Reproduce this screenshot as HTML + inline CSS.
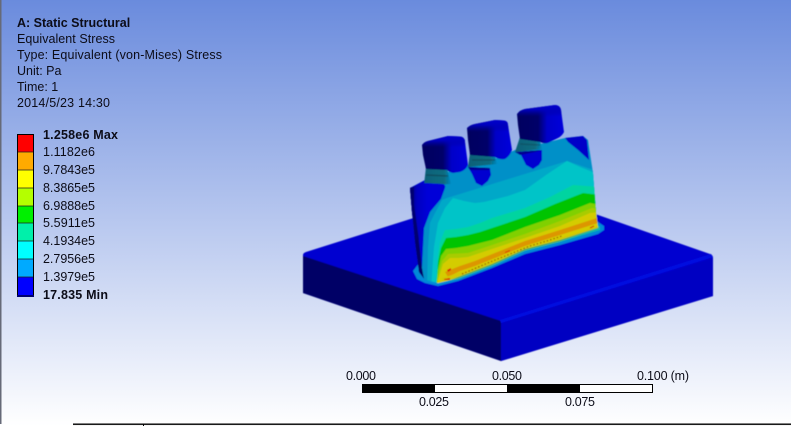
<!DOCTYPE html>
<html><head><meta charset="utf-8"><style>
html,body{margin:0;padding:0;background:#fff}
svg{display:block;position:absolute;left:0;top:0}
text{font-family:"Liberation Sans",sans-serif;font-size:12.5px;fill:#0c0c18}
.b{font-weight:bold}
</style></head><body style="width:791px;height:426px;overflow:hidden;position:relative">
<svg width="791" height="426" viewBox="0 0 791 426" xmlns="http://www.w3.org/2000/svg">
<defs>
<linearGradient id="bg" x1="0" y1="0" x2="0" y2="1"><stop offset="0" stop-color="#6a8bdd"/><stop offset="1" stop-color="#ffffff"/></linearGradient>
<linearGradient id="tab" x1="0" y1="0" x2="1" y2="0"><stop offset="0" stop-color="#000060"/><stop offset=".45" stop-color="#000068"/><stop offset=".64" stop-color="#0000c8"/><stop offset="1" stop-color="#0000dc"/></linearGradient>
<linearGradient id="tabtop" x1="0" y1="0" x2="0" y2="1"><stop offset="0" stop-color="#0000cc"/><stop offset=".12" stop-color="#0000c0"/><stop offset=".3" stop-color="#0000a0" stop-opacity="0"/></linearGradient>
<linearGradient id="neck" x1="0" y1="0" x2="1" y2="0"><stop offset="0" stop-color="#086078"/><stop offset=".75" stop-color="#0a6c80"/><stop offset="1" stop-color="#0088c0"/></linearGradient>
<linearGradient id="lobe" x1="0" y1="0" x2="1" y2="0"><stop offset="0" stop-color="#000080"/><stop offset=".2" stop-color="#0000c0"/><stop offset=".5" stop-color="#0000d8"/></linearGradient>
<clipPath id="body"><path d="M410 188L425 180L448 172L468 165L497 158L515 150L565 138L583 136L588 140L593 173L596 213L598 228L560 241L525 250L492 265L458 278L438 283L425 280L419 272L415 242L412 212Z"/></clipPath>
<filter id="s" x="-5%" y="-5%" width="110%" height="110%"><feGaussianBlur stdDeviation="0.5"/></filter>
</defs>
<rect width="791" height="426" fill="url(#bg)"/>
<rect x="0" y="0" width="1.5" height="424" fill="#666a78"/>
<rect x="73" y="423.5" width="718" height="1.4" fill="#000"/>
<rect x="73" y="425" width="718" height="1" fill="#f4f4f4"/>
<rect x="143" y="424" width="1" height="2" fill="#000"/>

<!-- plate -->
<g filter="url(#s)">
<path d="M303 255Q303 253 306 252L515 186L710 254Q713 255 713 258L713 296L501 361L303 293Z" fill="#0000d0"/>
<path d="M303 256L501 321L501 361L303 293Z" fill="#000066"/>
<path d="M501 323L713 258L713 296L501 361Z" fill="#0000c2"/>
<path d="M500 320L711 254L713 257L501 323Z" fill="#0010e0"/>

<!-- fringe at base -->
<path d="M413 271L420 262L598 222L604 226L604 230L598 234L560 245L525 254L492 268L458 281L438 286L425 283L417 279Z" fill="#0088d8"/>
<path d="M424 279L438 283L458 279L492 266L525 251L560 242L600 230L600 226L560 235L430 270Z" fill="#10b8a8"/>

<!-- body -->
<g clip-path="url(#body)">
<rect x="400" y="130" width="210" height="160" fill="#0090c8"/>
<path d="M405 175L445 175L440 198L430 212L424 228L422 268L425 290L405 290Z" fill="#0000d0"/>
<path d="M405 180L411 186L413 198L417 225L422 268L426 290L405 290Z" fill="#00006a"/>
<path d="M447 198L442 200L435 213L430 223L428 247L427 290L600 290L600 172L567 161Z" fill="#00a8c8"/>
<path d="M453 198L464 201L475 203L484 202L492 200L508 196L525 190L546 175L567 161L580 167L600 175L600 290L431 290L432 275L434 247L438 223L445 208Z" fill="#00c4c8"/>
<!-- seagreen -->
<path d="M438 255L440 242L445 230L456 229L468 227L480 223L492 218L525 208L550 197L573 185L600 187L600 290L436 290Z" fill="#00d4a0"/>
<!-- green -->
<path d="M438 262L441 248L446 238L456 237L468 235L480 232L492 228L525 217L555 204L583 193L600 195L600 290L436 290Z" fill="#00c400"/>
<!-- lime -->
<path d="M438 270L441 256L446 249L456 248L468 246L480 243L492 240L525 227L560 215L590 203L600 205L600 290L436 290Z" fill="#80d000"/>
<!-- yellow-lime -->
<path d="M438 276L442 261L448 254L468 253L492 245L525 234L560 221L592 208L600 209L600 290L436 290Z" fill="#a8cc00"/>
<!-- yellow -->
<path d="M438 280L443 264L450 258L458 258L468 257L492 249L525 238L560 226L590 213L600 212L600 290L436 290Z" fill="#d4cc00"/>
<!-- orange -->
<path d="M445 272L460 266L475 261L525 241L560 230L597 218L598 223L560 235L525 246L475 266L460 271L448 277Z" fill="#dc9600"/>
<path d="M442 278L475 268L525 249L560 238L600 226L600 232L560 244L525 254L458 280L442 285Z" fill="#d0c800"/>
<path d="M442 283L458 277L492 264L525 249L560 240L600 227L600 236L440 290Z" fill="#30a060"/>
<!-- hot spots -->
<path d="M447 270l4-2 0 2-3 2zM444 279l6-1 0 2-6 0zM505 252l5-2 0 1-5 2zM536 248l7-2 0 2-7 1z" fill="#d82000"/>
<path d="M462 274L476 268L490 262L510 254L530 246L550 240L562 236" stroke="#903000" stroke-width="1" stroke-dasharray="1.5 2" fill="none"/>
<path d="M590 228l4-2" stroke="#d02000" stroke-width="1"/>
</g>

<!-- holes -->
<path d="M468 167L490 168L491 175L488 181L482 186L476 183L472 174Z" fill="#0000d0"/>
<path d="M468 167L490 168L489 170L470 170Z" fill="#000090"/>
<path d="M515 152L542 150L542 160L539 165L533 169L526 165L521 155Z" fill="#0000d0"/>
<path d="M515 152L542 150L535 152L520 155Z" fill="#000090"/>
<!-- side tab right -->
<path d="M565 138L583 136L587 140L589 160L578 150L568 142Z" fill="#0000c8"/>
<!-- necks -->
<path d="M426 167L447 168L451 184L424 185Z" fill="url(#neck)"/>
<path d="M470 153L495 155L497 164L468 167Z" fill="url(#neck)"/>
<path d="M520 137L540 140L542 149L515 152Z" fill="url(#neck)"/>
<path d="M426 175L448 176" stroke="#0a4050" stroke-width="1.5" opacity=".6"/>
<path d="M472 160L495 160" stroke="#0a4050" stroke-width="1.5" opacity=".5"/>
<path d="M520 144L540 145" stroke="#0a4050" stroke-width="1.5" opacity=".4"/>
<!-- lobe -->
<path d="M410 188Q416 185 425 183L443 184Q446 185 445 188L441 199L430 212L424 228L419 240L416 240L412 212Z" fill="url(#lobe)"/>
<path d="M410 188L414 187L414 205L419 240L416 240L412 212Z" fill="#000070"/>
<!-- tabs -->
<g>
<path d="M422 145Q424 142 428 141L448 136L460 136.500Q465 137 465 142L468 165Q466 170 460 172L453 173Q449 172 447 170L426 169L423 155Z" fill="url(#tab)"/>
<path d="M422 145Q424 142 428 141L448 136L460 136.500Q465 137 465 142L468 165Q466 170 460 172L453 173Q449 172 447 170L426 169L423 155Z" fill="url(#tabtop)"/>
<path d="M467 128Q470 125 475 124L495 120L504 120.500Q508 121 508 125L512 150Q510 156 505 159Q500 160 495 157L470 155L468 140Z" fill="url(#tab)"/>
<path d="M467 128Q470 125 475 124L495 120L504 120.500Q508 121 508 125L512 150Q510 156 505 159Q500 160 495 157L470 155L468 140Z" fill="url(#tabtop)"/>
<path d="M517 114Q520 110 525 109L555 105Q560 105 561 110L564 132Q562 136 558 138L548 143Q544 144 540 142L520 139L518 125Z" fill="url(#tab)"/>
<path d="M517 114Q520 110 525 109L555 105Q560 105 561 110L564 132Q562 136 558 138L548 143Q544 144 540 142L520 139L518 125Z" fill="url(#tabtop)"/>
</g>
</g>

<!-- header text -->
<text x="17" y="27" class="b">A: Static Structural</text>
<text x="17" y="43" textLength="98">Equivalent Stress</text>
<text x="17" y="59" textLength="205">Type: Equivalent (von-Mises) Stress</text>
<text x="17" y="75">Unit: Pa</text>
<text x="17" y="91">Time: 1</text>
<text x="17" y="107" textLength="93">2014/5/23 14:30</text>

<!-- legend -->
<rect x="17" y="134" width="16" height="18" fill="#ff0000"/>
<rect x="17" y="152" width="16" height="18" fill="#ffaa00"/>
<rect x="17" y="170" width="16" height="18" fill="#ffff00"/>
<rect x="17" y="188" width="16" height="18" fill="#b4ff00"/>
<rect x="17" y="206" width="16" height="17" fill="#00f000"/>
<rect x="17" y="223" width="16" height="18" fill="#00f0aa"/>
<rect x="17" y="241" width="16" height="18" fill="#00ffff"/>
<rect x="17" y="259" width="16" height="18" fill="#00aaff"/>
<rect x="17" y="277" width="16" height="19" fill="#0000ff"/>
<path d="M17 152H33M17 170H33M17 188H33M17 206H33M17 223H33M17 241H33M17 259H33M17 277H33" stroke="#222" stroke-width=".7"/>
<rect x="17.5" y="134.500" width="16" height="162" fill="none" stroke="#000" stroke-width="1"/>
<rect x="17" y="295" width="17" height="2" fill="#000070"/>

<text x="43" y="139" class="b" textLength="75">1.258e6 Max</text>
<text x="43" y="156" textLength="52">1.1182e6</text>
<text x="43" y="174" textLength="52">9.7843e5</text>
<text x="43" y="192" textLength="52">8.3865e5</text>
<text x="43" y="210" textLength="52">6.9888e5</text>
<text x="43" y="227" textLength="52">5.5911e5</text>
<text x="43" y="245" textLength="52">4.1934e5</text>
<text x="43" y="263" textLength="52">2.7956e5</text>
<text x="43" y="281" textLength="52">1.3979e5</text>
<text x="43" y="299" class="b" textLength="65">17.835 Min</text>

<!-- scale -->
<text x="346" y="380" textLength="30">0.000</text>
<text x="492" y="380" textLength="30">0.050</text>
<text x="637" y="380" textLength="52">0.100 (m)</text>
<rect x="362.500" y="384.500" width="290" height="8" fill="#fff" stroke="#000" stroke-width="1"/>
<rect x="362" y="384" width="73" height="9" fill="#000"/>
<rect x="507" y="384" width="73" height="9" fill="#000"/>
<text x="419" y="406" textLength="30">0.025</text>
<text x="565" y="406" textLength="30">0.075</text>
</svg>
</body></html>
